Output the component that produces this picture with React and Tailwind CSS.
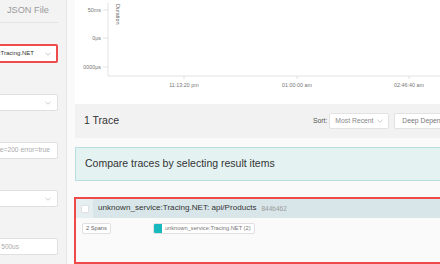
import React from "react";

const Chevron = ({ className = "" }) => (
  <svg width="6" height="4" viewBox="0 0 6 4" className={`shrink-0 ${className}`}>
    <path d="M0.5 0.8 L3 3.2 L5.5 0.8" fill="none" stroke="#bdbdbd" strokeWidth="0.8" />
  </svg>
);

function Field({ children, red, chevron, top, endGap }) {
  return (
    <div
      className={`-ml-[32px] w-[90px] shrink-0 bg-white rounded-[2px] flex items-center justify-end overflow-hidden ${
        red ? "border-2 border-[#ee4b4b] h-[19px] pr-[5px]" : "border border-[#e0e0e0] h-[17px] pr-[6px]"
      } ${top}`}
    >
      <span className={`whitespace-nowrap ${endGap}`}>{children}</span>
      {chevron && <Chevron />}
    </div>
  );
}

export default function App() {
  return (
    <div
      className="w-[440px] h-[264px] overflow-hidden flex bg-[#fafafa]"
      style={{ fontFamily: '"Liberation Sans", Arial, sans-serif' }}
    >
      {/* Sidebar */}
      <div className="w-[67px] shrink-0 h-full bg-[#f3f3f3] border-r border-[#e6e6e6] overflow-hidden flex flex-col">
        <div className="h-[23px] border-b border-[#e4e4e4] w-[58px] flex items-center pl-[7px] shrink-0">
          <span className="text-[9.2px] text-[#9a9a9a] whitespace-nowrap">JSON File</span>
        </div>
        <Field red chevron top="mt-[21px]" endGap="mr-[11px] text-[6px] text-[#333]">
          unknown_service:Tracing.NET
        </Field>
        <Field chevron top="mt-[31px]" endGap="mr-[9px] text-[6.5px]"> </Field>
        <Field top="mt-[31px]" endGap="mr-[1px] text-[6.7px] text-[#aaa]">
          http.status_code=200 error=true
        </Field>
        <Field chevron top="mt-[31px]" endGap="mr-[9px] text-[6.5px]"> </Field>
        <Field top="mt-[31px]" endGap="mr-[32px] text-[6.5px] text-[#aaa]">
          e.g. 1.2s, 100ms, 500us
        </Field>
      </div>

      {/* Main */}
      <div className="flex-1 overflow-hidden pl-[8px]">
        <div className="w-[400px] flex flex-col">
          {/* Chart */}
          <div className="h-[104px] bg-white">
            <svg width="400" height="104" viewBox="0 0 400 104">
              <g fill="#777" fontSize="5.4" fontFamily='"Liberation Sans", Arial, sans-serif'>
                <text x="26" y="12" textAnchor="end">50ms</text>
                <text x="26" y="40" textAnchor="end">0µs</text>
                <text x="26" y="69" textAnchor="end">0000µs</text>
                <text x="109" y="87" textAnchor="middle">11:13:20 pm</text>
                <text x="222" y="87" textAnchor="middle">01:00:00 am</text>
                <text x="334" y="87" textAnchor="middle">02:46:40 am</text>
                <text x="0" y="0" transform="translate(41 4) rotate(90)" fill="#666">Duration</text>
              </g>
              <g stroke="#dcdcdc" strokeWidth="0.8">
                <line x1="28" y1="10" x2="33" y2="10" />
                <line x1="28" y1="38" x2="33" y2="38" />
                <line x1="28" y1="67" x2="33" y2="67" />
                <line x1="33" y1="3" x2="33" y2="76" />
                <line x1="33" y1="76" x2="400" y2="76" />
                <line x1="109" y1="76" x2="109" y2="79" />
                <line x1="222" y1="76" x2="222" y2="79" />
                <line x1="334" y1="76" x2="334" y2="79" />
              </g>
            </svg>
          </div>

          {/* Header */}
          <div className="h-[34px] bg-[#f2f2f2] flex items-center pl-[9px]">
            <span className="text-[10.5px] text-[#333]">1 Trace</span>
            <div className="ml-auto flex items-center w-[162px] shrink-0">
              <span className="text-[6.8px] text-[#555] mr-[2px]">Sort:</span>
              <div className="h-[16px] w-[60px] shrink-0 bg-white border border-[#e2e2e2] rounded-[2px] flex items-center justify-between px-[5px]">
                <span className="text-[6.8px] text-[#888] whitespace-nowrap">Most Recent</span>
                <Chevron />
              </div>
              <div className="ml-[5px] h-[16px] w-[90px] shrink-0 bg-white border border-[#e2e2e2] rounded-[2px] flex items-center px-[7px] overflow-hidden">
                <span className="text-[6.8px] text-[#777] whitespace-nowrap">Deep Dependency Graph</span>
              </div>
            </div>
          </div>

          {/* Compare */}
          <div className="mt-[9px] h-[34px] bg-[#e4f2f2] border border-[#b9dede] flex items-center pl-[9px]">
            <span className="text-[10.5px] text-[#333] whitespace-nowrap">Compare traces by selecting result items</span>
          </div>

          {/* Trace item */}
          <div className="mt-[16px] -ml-[1px] h-[67px] border-2 border-[#ef4a4a] bg-[#fafafa] flex flex-col">
            <div className="h-[19px] bg-[#d8e6e9] flex items-center">
              <div className="w-[17px] h-full bg-[#e5eef0] flex items-center justify-center">
                <div className="w-[8px] h-[8px] bg-white border border-[#e0e0e0] rounded-[1px]" />
              </div>
              <span className="ml-[5px] text-[8.1px] text-[#333] whitespace-nowrap">unknown_service:Tracing.NET: api/Products</span>
              <span className="ml-[5px] text-[6.5px] text-[#9a9a9a]">844b462</span>
            </div>
            <div className="flex items-start mt-[5px] pl-[6px]">
              <div className="h-[11px] px-[3px] bg-white border border-[#e0e0e0] rounded-[2px] flex items-center">
                <span className="text-[5.7px] text-[#666] whitespace-nowrap">2 Spans</span>
              </div>
              <div className="ml-[42px] h-[11px] pr-[3px] bg-white border border-[#e0e0e0] rounded-[2px] flex items-center">
                <div className="w-[8px] h-full bg-[#17b8be] rounded-l-[1px]" />
                <span className="ml-[3px] text-[5.7px] text-[#777] whitespace-nowrap">unknown_service:Tracing.NET (2)</span>
              </div>
            </div>
          </div>
        </div>
      </div>
    </div>
  );
}
